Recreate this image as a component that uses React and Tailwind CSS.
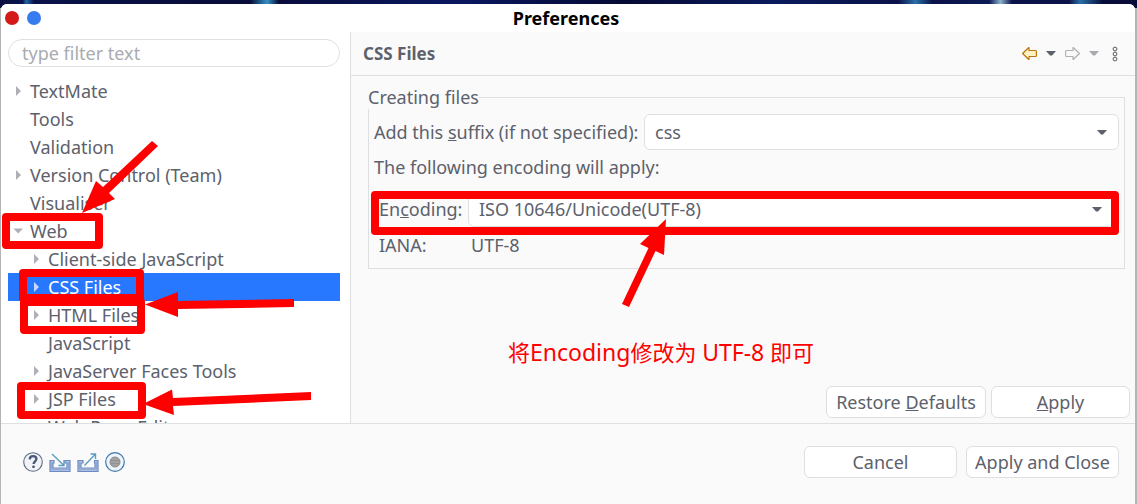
import React from 'react';

const TREE = [
  { label: 'TextMate', level: 0, state: 'closed' },
  { label: 'Tools', level: 0 },
  { label: 'Validation', level: 0 },
  { label: 'Version Control (Team)', level: 0, state: 'closed' },
  { label: 'Visualiser', level: 0 },
  { label: 'Web', level: 0, state: 'open' },
  { label: 'Client-side JavaScript', level: 1, state: 'closed' },
  { label: 'CSS Files', level: 1, state: 'closed', selected: true },
  { label: 'HTML Files', level: 1, state: 'closed' },
  { label: 'JavaScript', level: 1 },
  { label: 'JavaServer Faces Tools', level: 1, state: 'closed' },
  { label: 'JSP Files', level: 1, state: 'closed' },
  { label: 'Web Page Editor', level: 1 },
];

function Twisty({ state }) {
  return (
    <svg className="h-3 w-3 shrink-0" viewBox="0 0 12 12" fill="currentColor" aria-hidden="true">
      {state === 'closed' && <path d="M4 1v10L9 6z" />}
      {state === 'open' && <path d="M1.500 3.500h9.500L6.200 8.500z" />}
    </svg>
  );
}

function TreeRow({ item }) {
  return (
    <li
      role="treeitem"
      aria-selected={Boolean(item.selected)}
      aria-expanded={item.state ? item.state === 'open' : undefined}
      className={`flex h-7 shrink-0 items-center gap-1.5 whitespace-nowrap ${item.level ? 'pl-[22px]' : 'pl-1'} ${
        item.selected ? 'bg-[#2777ff] text-white' : ''
      }`}
    >
      <span className={item.selected ? 'text-[#c5d9ff]' : 'text-[#aeb0b6]'}>
        <Twisty state={item.state} />
      </span>
      {item.label}
    </li>
  );
}

function Caret({ className = '' }) {
  return (
    <svg className={`h-[5px] w-2.5 ${className}`} viewBox="0 0 10 5" fill="currentColor" aria-hidden="true">
      <path d="M0 0h10L6 4.6H4z" />
    </svg>
  );
}

function Combo({ id, value }) {
  return (
    <div className="grid min-w-0 flex-1 items-center">
      <select
        id={id}
        defaultValue={value}
        className="col-start-1 row-start-1 h-9 w-full appearance-none rounded-md border border-[#dedfe1] bg-white pr-8 pl-2.5"
      >
        <option>{value}</option>
      </select>
      <Caret className="pointer-events-none col-start-1 row-start-1 mr-3 justify-self-end" />
    </div>
  );
}

function PushButton({ className = '', children }) {
  return (
    <button
      type="button"
      className={`h-8 rounded-md border border-[#dedfe1] bg-white text-center whitespace-nowrap ${className}`}
    >
      {children}
    </button>
  );
}

function BlockArrow({ forward }) {
  return (
    <svg className="h-[13px] w-[15px]" viewBox="0 0 15 13" aria-hidden="true">
      <path
        d={
          forward
            ? 'M14.400 6.500 8.500.7H8v2.800H1.500q-.9 0-.9.9v4.200q0 .9.9.9H8v2.800h.5z'
            : 'M.6 6.500 6.500.7H7v2.800h6.500q.9 0 .9.9v4.200q0 .9-.9.9H7v2.800h-.5z'
        }
        fill={forward ? '#fafafa' : '#fff3c4'}
        stroke={forward ? '#b0b0b0' : '#b9760c'}
        strokeWidth="1.200"
        strokeLinejoin="round"
      />
    </svg>
  );
}

function HelpIcon() {
  return (
    <svg className="h-5 w-5" viewBox="0 0 20 20" aria-hidden="true">
      <circle cx="10" cy="10" r="9.300" fill="#f2f3f6" stroke="#5d6b85" strokeWidth="1.100" />
      <path d="M6.700 7.400C6.800 5.300 8.100 4.200 10 4.200c2 0 3.400 1.100 3.400 2.800 0 2.300-2.800 2.400-2.800 5" fill="none" stroke="#475878" strokeWidth="2.300" />
      <circle cx="10.500" cy="14.800" r="1.400" fill="#475878" />
    </svg>
  );
}

function TrayIcon({ out }) {
  return (
    <svg className="h-5 w-[22px]" viewBox="0 0 22 20" fill="none" aria-hidden="true">
      <path
        d={out ? 'M6 8.500H1v11h20v-11h-3.500v2.500H18v5H4v-5h2z' : 'M5 8.500H1v11h20v-11h-5V11h2v5H4v-5h1z'}
        fill="#b3c4e4"
        stroke="#6c8ac1"
        strokeWidth="1.200"
      />
      <path d="M2.500 10v7.700h17V10" stroke="#8ea6d3" />
      {out ? (
        <path d="M7.500 13.500 18 2.500M13.500 2h5v5" stroke="#5c9cc5" strokeWidth="1.400" />
      ) : (
        <path d="M3 2l11.500 11M15 8v5.500H9.500" stroke="#5c9cc5" strokeWidth="1.400" />
      )}
    </svg>
  );
}

function RecordIcon() {
  return (
    <svg className="h-5 w-5" viewBox="0 0 20 20" aria-hidden="true">
      <circle cx="10" cy="10" r="9.300" fill="#eef4fb" stroke="#3d77a8" strokeWidth="1.200" />
      <circle cx="10" cy="10" r="5" fill="#a2a2a2" stroke="#8a8a8a" />
      <path d="M5.500 8.500h9M5.200 11.500h9.600" stroke="#8e8e8e" strokeWidth=".8" />
    </svg>
  );
}

function Annotations() {
  return (
    <div className="pointer-events-none absolute top-0 left-0 text-[#ff0000]">
      <svg width="1137" height="504" viewBox="0 0 1137 504" aria-hidden="true">
        <g fill="none" stroke="currentColor" strokeWidth="8" strokeLinejoin="round">
          <rect x="6" y="217" width="93" height="28" />
          <rect x="23" y="273" width="117" height="25" />
          <rect x="24" y="302" width="117" height="28" />
          <rect x="21" y="386" width="121" height="29" />
          <rect x="375" y="195" width="740" height="36" />
        </g>
        <g fill="currentColor">
          <path d="M152 141 103 187 96 181 82 213 115 199 109 193 158 146z" />
          <path d="M145 304.500 178 292V301L294 299V307L178 309V317z" />
          <path d="M143 404 172 389.500 173 398 311 392V400L173 406 174 415z" />
          <path d="M666 219 640 244 648.500 248 622 304 629 307 655.500 251 664 255z" />
        </g>
      </svg>
      <p className="absolute top-[336px] left-[508px] text-[22px] leading-8 whitespace-nowrap">
        将<span className="text-[23px]">Encoding</span>修改为 <span className="text-[23px]">UTF-8</span> 即可
      </p>
    </div>
  );
}

export default function App() {
  return (
    <div className="relative flex h-screen flex-col overflow-hidden bg-[#b4b4b6] pt-1 pr-0.5 pl-px font-['Noto_Sans','Noto_Sans_CJK_SC',sans-serif] text-lg leading-6 text-[#5c616c]">
      <div className="absolute inset-x-0 top-0 h-2 bg-[linear-gradient(90deg,#08103f_0%,#0a1550_2%,#2467a8_2.3%,#0a1248_3%,#070c38_22%,#3592c4_23.5%,#080d3c_24.5%,#0a1760_40%,#060a34_55%,#0a1a5c_68%,#0a1248_79%,#2a6fa8_80.5%,#0a1248_82%,#0c1a55_87%,#8ab2cc_88%,#0a1248_89%,#0a1248_94%,#2a6fa8_95%,#070c38_97%)]" />

      <main className="relative flex min-h-0 flex-1 flex-col overflow-hidden rounded-t-md bg-[#fafafa]">
        <header className="grid h-7 shrink-0 grid-cols-[1fr_auto_1fr] items-center bg-white pr-2 pl-1">
          <div className="flex gap-2">
            <button type="button" aria-label="Close" className="h-[14px] w-[14px] rounded-full bg-[#d41919]" />
            <button type="button" aria-label="Maximize" className="h-[14px] w-[14px] rounded-full bg-[#367bf0]" />
          </div>
          <h1 className="text-lg leading-6 font-bold text-black">Preferences</h1>
        </header>

        <div className="flex min-h-0 flex-1">
          <nav className="flex w-[350px] shrink-0 flex-col overflow-hidden border-r border-[#dedfe1] bg-white pt-[7px] pr-2.5 pl-[7px]">
            <input
              type="text"
              aria-label="Filter"
              placeholder="type filter text"
              className="h-7 w-full shrink-0 rounded-full border border-[#dedfe1] bg-white px-[13px] placeholder:text-[#a9abb0]"
            />
            <ul role="tree" className="mt-2.5 flex min-h-0 flex-1 flex-col overflow-hidden">
              {TREE.map((item) => (
                <TreeRow key={item.label} item={item} />
              ))}
            </ul>
          </nav>

          <section className="flex min-w-0 flex-1 flex-col">
            <div className="flex h-11 shrink-0 items-center border-b border-[#dedfe1] pr-[17px] pl-3">
              <h2 className="flex-1 text-[17px] font-bold">CSS Files</h2>
              <div className="flex items-center gap-[9px]">
                <button type="button" aria-label="Back">
                  <BlockArrow />
                </button>
                <button type="button" aria-label="Back history">
                  <Caret />
                </button>
                <button type="button" aria-label="Forward">
                  <BlockArrow forward />
                </button>
                <button type="button" aria-label="Forward history" className="text-[#a9abb0]">
                  <Caret />
                </button>
                <button type="button" aria-label="View menu" className="ml-1">
                  <svg className="h-4 w-1.5" viewBox="0 0 6 16" fill="none" stroke="#5a5a5a" aria-hidden="true">
                    <circle cx="3" cy="3" r="1.900" />
                    <circle cx="3" cy="8" r="1.900" />
                    <circle cx="3" cy="13" r="1.900" />
                  </svg>
                </button>
              </div>
            </div>

            <div className="flex flex-1 flex-col justify-between pt-[9px] pb-[5px]">
              <fieldset className="mr-2.5 ml-[17px] border border-[#dedfe1] pb-[11px]">
                <legend className="-ml-px">Creating files</legend>
                <div className="mt-[5px] flex items-center px-[5px]">
                  <label htmlFor="suffix" className="w-[270px] shrink-0 whitespace-nowrap">
                    Add this <u>s</u>uffix (if not specified):
                  </label>
                  <Combo id="suffix" value="css" />
                </div>
                <p className="mt-[5px] pl-[5px]">The following encoding will apply:</p>
                <div className="mt-3 flex items-center px-2.5">
                  <label htmlFor="encoding" className="w-[89px] shrink-0">
                    En<u>c</u>oding:
                  </label>
                  <Combo id="encoding" value="ISO 10646/Unicode(UTF-8)" />
                </div>
                <dl className="mt-1.5 flex pl-2.5">
                  <dt className="w-[92px]">IANA:</dt>
                  <dd>UTF-8</dd>
                </dl>
              </fieldset>

              <div className="flex justify-end gap-[5px] pr-[5px]">
                <PushButton className="w-40">
                  Restore <u>D</u>efaults
                </PushButton>
                <PushButton className="w-[139px]">
                  <u>A</u>pply
                </PushButton>
              </div>
            </div>
          </section>
        </div>

        <footer className="flex h-[81px] shrink-0 items-center justify-between border-t border-[#dedfe1] pr-4 pb-1 pl-[22px]">
          <div className="flex items-center gap-1.5">
            <button type="button" aria-label="Help">
              <HelpIcon />
            </button>
            <button type="button" aria-label="Import">
              <TrayIcon />
            </button>
            <button type="button" aria-label="Export">
              <TrayIcon out />
            </button>
            <button type="button" aria-label="Record">
              <RecordIcon />
            </button>
          </div>
          <div className="flex gap-[9px]">
            <PushButton className="w-[153px]">Cancel</PushButton>
            <PushButton className="w-[153px]">Apply and Close</PushButton>
          </div>
        </footer>
      </main>

      <Annotations />
    </div>
  );
}
